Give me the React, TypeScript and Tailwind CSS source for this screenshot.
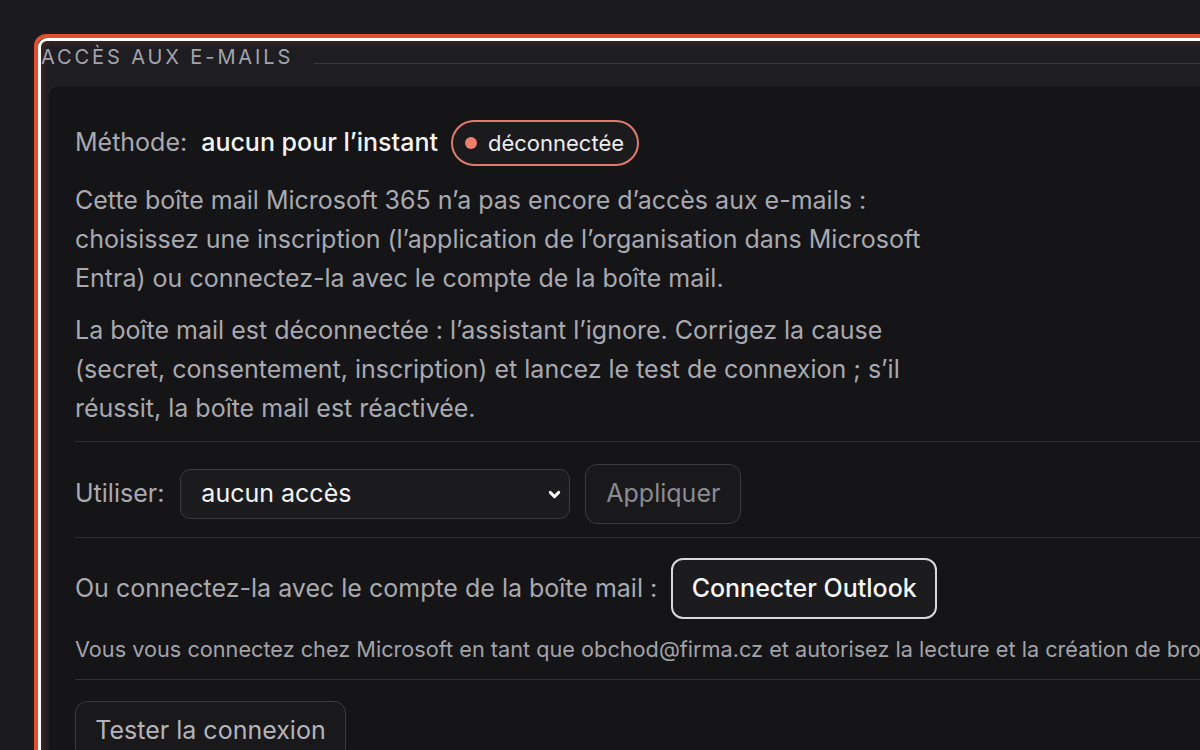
import { ChevronDown } from "lucide-react";

// Email access panel (zoomed settings view)
export default function App() {
  return (
    <div className="w-[1200px] h-[750px] overflow-hidden bg-[#1c1c20] pt-[34px] pl-[34px] font-['Inter',sans-serif]">
      <div className="w-[1300px] h-[900px] rounded-[12px] border-4 border-[#e4502f]">
        <div className="h-full rounded-[9px] border-[3px] border-white bg-[#1e1e22] shadow-[inset_0_0_10px_rgba(190,60,40,0.35)]">
          {/* legend */}
          <div className="flex items-center h-[45px]">
            <span className="text-[20px] leading-none tracking-[0.145em] text-[#a3a3aa] whitespace-nowrap -mt-[14px]">
              ACCÈS AUX E-MAILS
            </span>
            <div className="flex-1 ml-[21px] border-t border-[#38383d]" />
          </div>

          <div className="ml-[8px] rounded-tl-[10px] bg-[#151517] h-full pl-[26px] pt-[34px]">
            {/* method + status */}
            <div className="flex items-center h-[46px] text-[25px]">
              <span className="text-[#a9a9b0]">Méthode:</span>
              <span className="ml-[14px] text-[#f4f4f5] font-medium">aucun pour l’instant</span>
              <span className="ml-[13px] flex items-center h-[46px] pl-[12px] pr-[13px] rounded-full border-2 border-[#e17c6c] bg-[#1b1b1e]">
                <span className="w-[12px] h-[12px] rounded-full bg-[#f07e6e]" />
                <span className="ml-[11px] text-[22px] text-[#ececee]">déconnectée</span>
              </span>
            </div>

            <div className="max-w-[860px] text-[25px] leading-[39px] text-[#a9a9b0]">
              <p className="mt-[15px]">
                Cette boîte mail Microsoft 365 n’a pas encore d’accès aux e-mails : choisissez une inscription (l’application de l’organisation dans Microsoft Entra) ou connectez-la avec le compte de la boîte mail.
              </p>
              <p className="mt-[13px]">
                La boîte mail est déconnectée : l’assistant l’ignore. Corrigez la cause (secret, consentement, inscription) et lancez le test de connexion ; s’il réussit, la boîte mail est réactivée.
              </p>
            </div>

            <div className="mt-[13px] border-t border-[#303034]" />

            {/* registration select */}
            <div className="flex items-center mt-[22px] h-[60px] text-[25px]">
              <span className="text-[#a9a9b0]">Utiliser:</span>
              <div className="ml-[16px] w-[390px] h-[50px] flex items-center justify-between pl-[20px] pr-[6px] rounded-[10px] border border-[#3a3a3f] bg-[#1c1c1f]">
                <span className="text-[#f4f4f5]">aucun accès</span>
                <ChevronDown className="w-[17px] h-[17px] text-white" strokeWidth={4} />
              </div>
              <button className="ml-[15px] h-[60px] w-[156px] rounded-[12px] border border-[#3a3a3f] bg-[#19191c] text-[#8b8b92]">
                Appliquer
              </button>
            </div>

            <div className="mt-[13px] border-t border-[#303034]" />

            {/* oauth connect */}
            <div className="flex items-center mt-[20px] h-[61px] text-[25px]">
              <span className="text-[#a9a9b0]">Ou connectez-la avec le compte de la boîte mail :</span>
              <button className="ml-[14px] h-[61px] w-[266px] rounded-[12px] border-2 border-[#d9d9dc] bg-[#1c1c1f] text-[#f7f7f8] font-medium">
                Connecter Outlook
              </button>
            </div>
            <p className="mt-[15px] text-[21.7px] leading-[30px] text-[#a3a3aa] whitespace-nowrap">
              Vous vous connectez chez Microsoft en tant que obchod@firma.cz et autorisez la lecture et la création de brouillons.
            </p>

            <div className="mt-[15px] border-t border-[#303034]" />

            <button className="mt-[21px] h-[60px] w-[271px] rounded-[12px] border border-[#3a3a3f] bg-[#19191c] text-[25px] text-[#b4b4ba]">
              Tester la connexion
            </button>
          </div>
        </div>
      </div>
    </div>
  );
}
